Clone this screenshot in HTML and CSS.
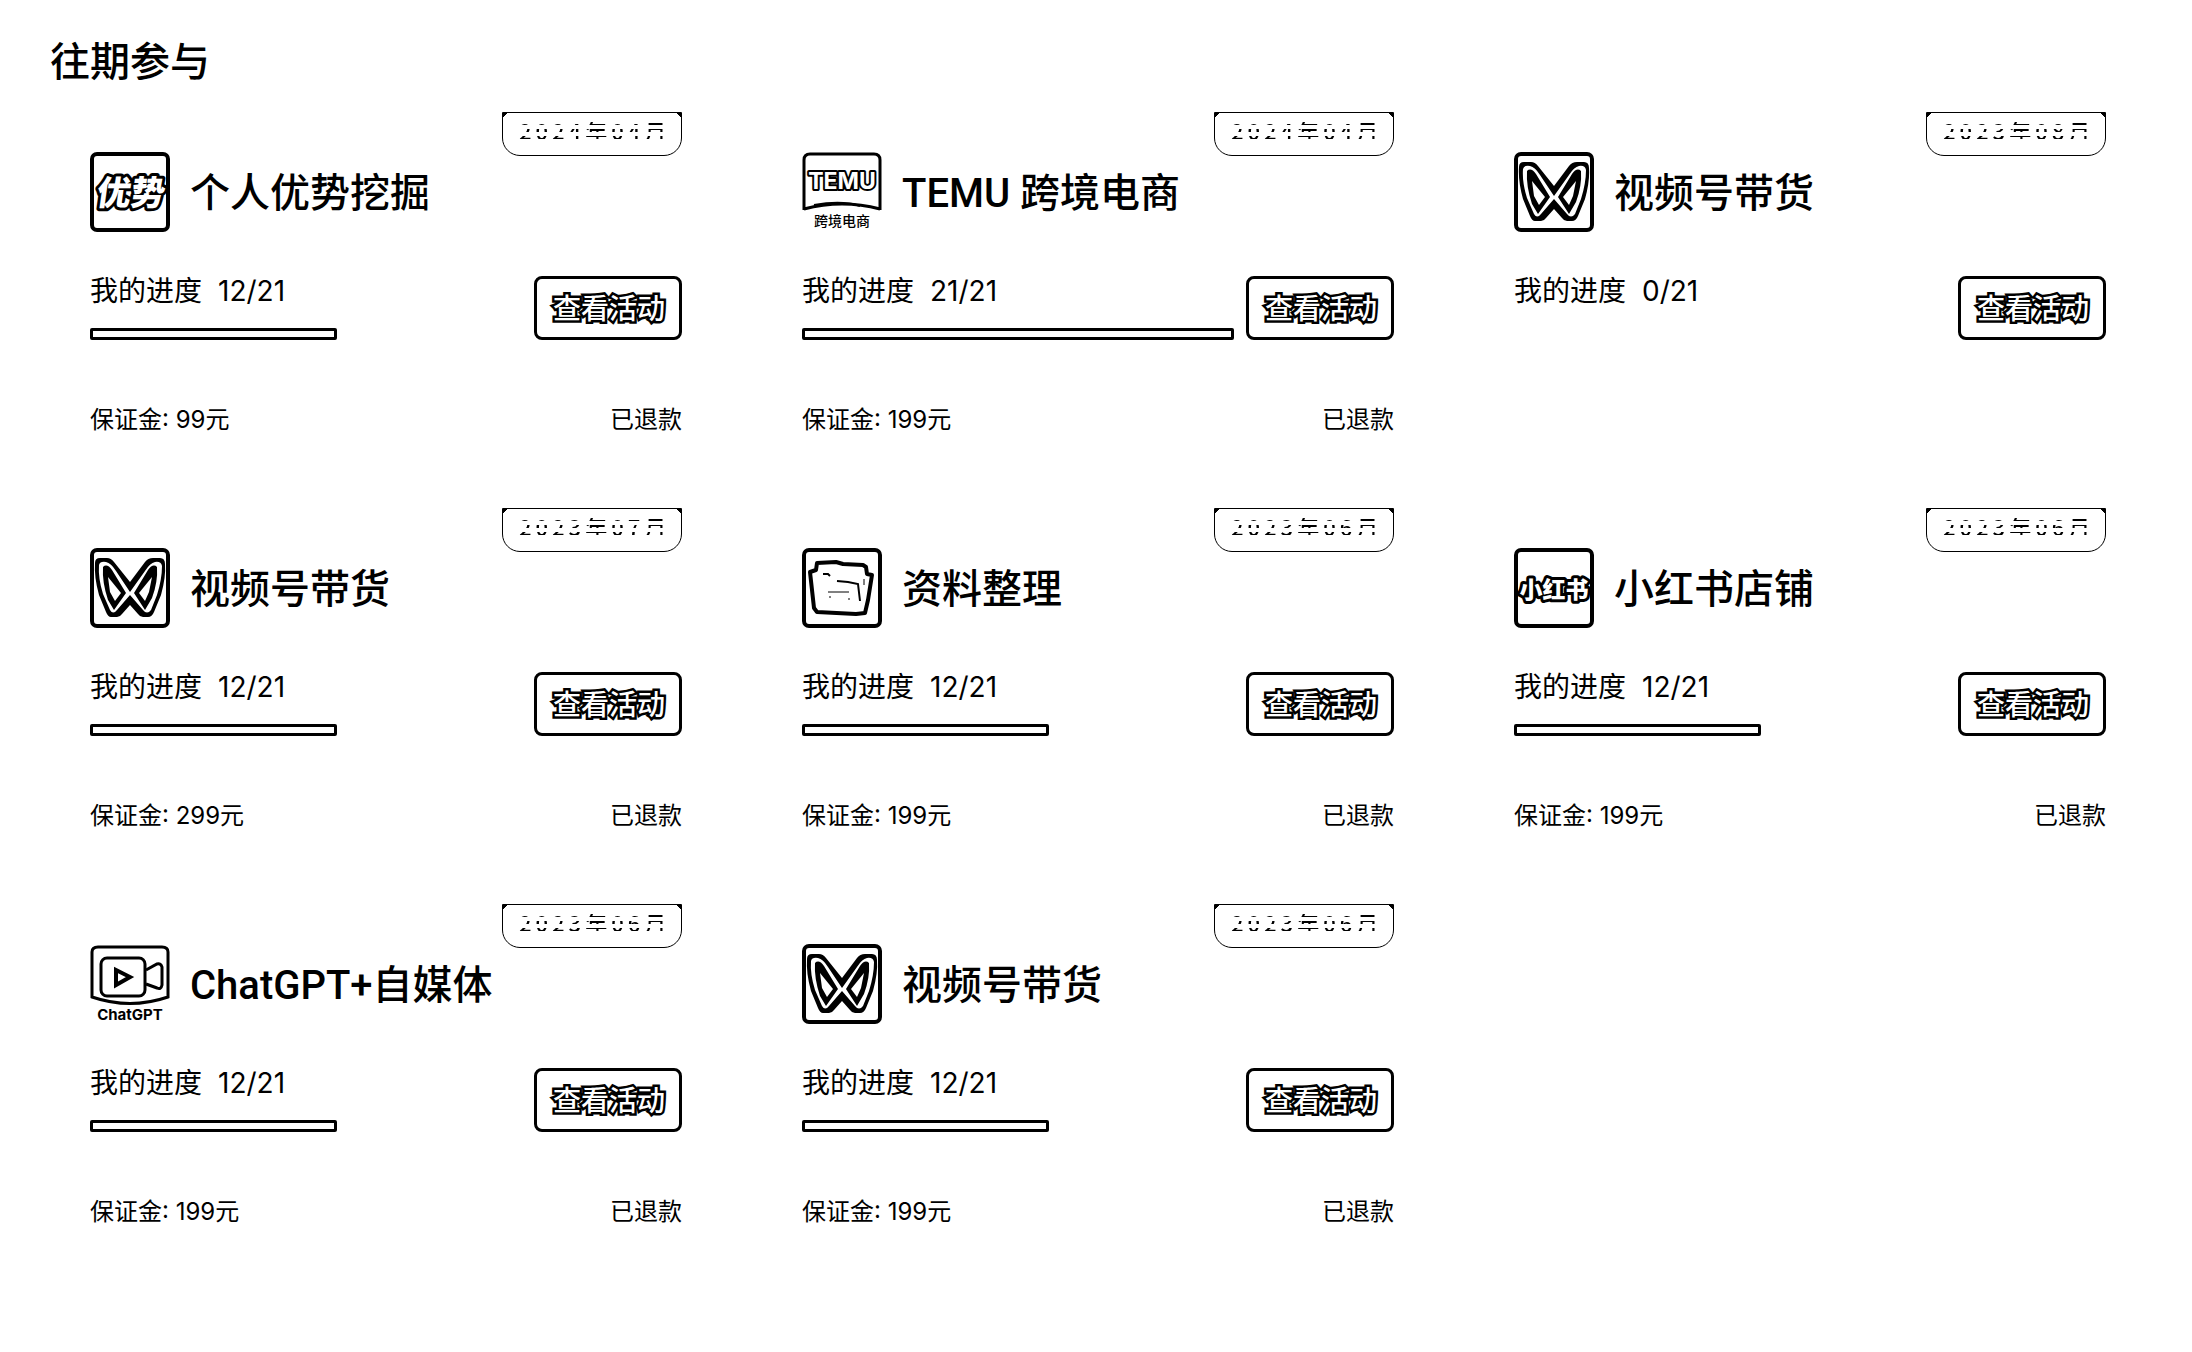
FILE: index.html
```html
<!DOCTYPE html>
<html lang="zh-CN">
<head>
<meta charset="utf-8">
<meta name="viewport" content="width=device-width, initial-scale=1">
<title>往期参与</title>
<link rel="stylesheet" href="styles.css">
</head>
<body>
<svg class="sprite" aria-hidden="true">
  <symbol id="frame" viewBox="0 0 80 80">
    <rect x="2" y="2" width="76" height="76" rx="5" fill="#fff" stroke="#000" stroke-width="4"/>
  </symbol>
  <symbol id="channels" viewBox="0 0 80 80">
    <use href="#frame"/>
    <path d="M5 15Q5 10 10 10H17Q21 10 24 14L40 34L55 14Q58 10 63 10H70Q75 10 75 16Q76 29 71 47L64 64Q62 69 58 69H53Q50 69 48 66L40 57L32 66Q30 69 27 69H21Q18 69 16 64L9 47Q4 29 5 15Z" fill="#000"/>
    <path d="M9 17Q10 13 16 14Q21 15 26 23L40 44L55 23Q60 15 65 14Q71 13 72 18Q72 31 67 47L61 62Q57 67 53 62L40 47L27 62Q23 67 20 62L13 46Q8 30 9 17Z" fill="#fff"/>
    <path d="M13 19Q17 15 22 22L36 45L24 62L18 52Q12 34 13 19Z M18 29L20 44L25 53L31 45Z" fill="#000" fill-rule="evenodd"/>
    <path d="M67 19Q63 15 58 22L44 45L55 62L62 50Q68 34 67 19Z M62 29L49 45L55 53L59 44Z" fill="#000" fill-rule="evenodd"/>
  </symbol>
</svg>

<main class="page">
  <h1 class="page-title">往期参与</h1>
  <div class="grid">

    <article class="card">
      <time class="date"><span>2024年04月</span></time>
      <header class="head">
        <svg class="icon" viewBox="0 0 80 80" aria-hidden="true"><use href="#frame"/><text class="icon-word" x="40" y="53" font-size="34" transform="translate(7 0) skewX(-8)" text-anchor="middle">优势</text></svg>
        <h2 class="name">个人优势挖掘</h2>
      </header>
      <div class="status">
        <div class="progress"><p class="label">我的进度<span class="count">12/21</span></p><div class="track"><div class="bar" style="width:57.14%"></div></div></div>
        <button class="view" type="button">查看活动</button>
      </div>
      <footer class="foot"><span>保证金: 99元</span><span>已退款</span></footer>
    </article>

    <article class="card">
      <time class="date"><span>2024年04月</span></time>
      <header class="head">
        <svg class="icon" viewBox="0 0 80 80" aria-hidden="true"><path d="M2 58V8Q2 2 8 2H72Q78 2 78 8V58M2 57Q40 47 78 57" fill="none" stroke="#000" stroke-width="3"/><path d="M12 53Q40 48 58 54" fill="none" stroke="#000" stroke-width="2"/><text class="icon-word thin latin" x="40" y="37" font-size="23" text-anchor="middle">TEMU</text><text class="icon-caption" x="40" y="74" font-size="14" text-anchor="middle">跨境电商</text></svg>
        <h2 class="name">TEMU 跨境电商</h2>
      </header>
      <div class="status">
        <div class="progress"><p class="label">我的进度<span class="count">21/21</span></p><div class="track"><div class="bar" style="width:100%"></div></div></div>
        <button class="view" type="button">查看活动</button>
      </div>
      <footer class="foot"><span>保证金: 199元</span><span>已退款</span></footer>
    </article>

    <article class="card">
      <time class="date"><span>2023年08月</span></time>
      <header class="head">
        <svg class="icon" viewBox="0 0 80 80" aria-hidden="true"><use href="#channels"/></svg>
        <h2 class="name">视频号带货</h2>
      </header>
      <div class="status">
        <div class="progress"><p class="label">我的进度<span class="count">0/21</span></p></div>
        <button class="view" type="button">查看活动</button>
      </div>
    </article>

    <article class="card">
      <time class="date"><span>2023年07月</span></time>
      <header class="head">
        <svg class="icon" viewBox="0 0 80 80" aria-hidden="true"><use href="#channels"/></svg>
        <h2 class="name">视频号带货</h2>
      </header>
      <div class="status">
        <div class="progress"><p class="label">我的进度<span class="count">12/21</span></p><div class="track"><div class="bar" style="width:57.14%"></div></div></div>
        <button class="view" type="button">查看活动</button>
      </div>
      <footer class="foot"><span>保证金: 299元</span><span>已退款</span></footer>
    </article>

    <article class="card">
      <time class="date"><span>2023年06月</span></time>
      <header class="head">
        <svg class="icon" viewBox="0 0 80 80" aria-hidden="true"><use href="#frame"/><path d="M14 22L15 15L34 14L41 16L61 17L64 19L65 26L70 27L66 52L63 65L54 66L15 64L12 60L8 24Z" fill="#fff" stroke="#000" stroke-width="4" stroke-linejoin="round"/><path d="M21 26H26L28 28M35 33L46 34L56 36L58 53" fill="none" stroke="#000" stroke-width="2"/><path d="M26 44H47M27 49h2M46 51h2M62 31v6" fill="none" stroke="#000" stroke-width="1"/></svg>
        <h2 class="name">资料整理</h2>
      </header>
      <div class="status">
        <div class="progress"><p class="label">我的进度<span class="count">12/21</span></p><div class="track"><div class="bar" style="width:57.14%"></div></div></div>
        <button class="view" type="button">查看活动</button>
      </div>
      <footer class="foot"><span>保证金: 199元</span><span>已退款</span></footer>
    </article>

    <article class="card">
      <time class="date"><span>2023年06月</span></time>
      <header class="head">
        <svg class="icon" viewBox="0 0 80 80" aria-hidden="true"><use href="#frame"/><text class="icon-word" x="40" y="50" font-size="23" text-anchor="middle">小红书</text></svg>
        <h2 class="name">小红书店铺</h2>
      </header>
      <div class="status">
        <div class="progress"><p class="label">我的进度<span class="count">12/21</span></p><div class="track"><div class="bar" style="width:57.14%"></div></div></div>
        <button class="view" type="button">查看活动</button>
      </div>
      <footer class="foot"><span>保证金: 199元</span><span>已退款</span></footer>
    </article>

    <article class="card">
      <time class="date"><span>2023年06月</span></time>
      <header class="head">
        <svg class="icon" viewBox="0 0 80 80" aria-hidden="true"><path d="M2 53V8Q2 3 8 3H72Q78 3 78 8V53Q40 66 2 53Z" fill="none" stroke="#000" stroke-width="3"/><rect x="11" y="14" width="44" height="38" rx="6" fill="none" stroke="#000" stroke-width="3"/><path d="M26 26V41L40 33Z" fill="none" stroke="#000" stroke-width="4"/><path d="M56 26L67 20Q71 19 72 23V41Q71 46 67 44L56 40" fill="none" stroke="#000" stroke-width="3"/><text class="icon-caption latin" x="40" y="76" font-size="15" text-anchor="middle">ChatGPT</text></svg>
        <h2 class="name">ChatGPT+自媒体</h2>
      </header>
      <div class="status">
        <div class="progress"><p class="label">我的进度<span class="count">12/21</span></p><div class="track"><div class="bar" style="width:57.14%"></div></div></div>
        <button class="view" type="button">查看活动</button>
      </div>
      <footer class="foot"><span>保证金: 199元</span><span>已退款</span></footer>
    </article>

    <article class="card">
      <time class="date"><span>2023年06月</span></time>
      <header class="head">
        <svg class="icon" viewBox="0 0 80 80" aria-hidden="true"><use href="#channels"/></svg>
        <h2 class="name">视频号带货</h2>
      </header>
      <div class="status">
        <div class="progress"><p class="label">我的进度<span class="count">12/21</span></p><div class="track"><div class="bar" style="width:57.14%"></div></div></div>
        <button class="view" type="button">查看活动</button>
      </div>
      <footer class="foot"><span>保证金: 199元</span><span>已退款</span></footer>
    </article>

  </div>
</main>
</body>
</html>
```
FILE: styles.css
```css
* { box-sizing: border-box; }

body {
  margin: 0;
  background: #fff;
  color: #000;
  font-family: Inter, "Noto Sans CJK SC", sans-serif;
}

h1, h2, p { margin: 0; font-weight: 500; }

.sprite { position: absolute; width: 0; height: 0; }

.page { padding: 34px 46px 40px 50px; }

.page-title {
  margin-bottom: 22px;
  font-size: 40px;
  line-height: 56px;
}

.grid {
  display: grid;
  grid-template-columns: repeat(3, minmax(0, 1fr));
  gap: 40px;
}

.card {
  position: relative;
  min-height: 356px;
  padding: 40px 40px 30px;
}

/* Month tag hanging from the top edge of the card */
.date {
  position: absolute;
  top: 0;
  right: 40px;
  width: 180px;
  height: 44px;
  padding-left: 16px;
  border: 1px solid #000;
  border-radius: 0 0 18px 18px;
  background:
    linear-gradient(135deg, #000 3px, transparent 3px),
    linear-gradient(225deg, #000 3px, transparent 3px);
  font-family: "Noto Sans CJK SC", sans-serif;
  font-size: 22px;
  font-weight: 500;
  line-height: 34px;
  letter-spacing: 4px;
  white-space: nowrap;
}

/* Glyphs show through narrow bands only */
.date span {
  display: block;
  color: transparent;
  background: linear-gradient(#000, #000) 0 9px / 100% 3px no-repeat,
    linear-gradient(#000, #000) 0 16px / 100% 3px no-repeat,
    linear-gradient(#000, #000) 0 23px / 100% 3px no-repeat;
  -webkit-background-clip: text;
  background-clip: text;
}

.head {
  display: flex;
  align-items: center;
  gap: 20px;
  margin-bottom: 44px;
}

.icon { flex: none; width: 80px; height: 80px; }

.icon-word {
  fill: #fff;
  stroke: #000;
  stroke-width: 6px;
  stroke-linejoin: round;
  paint-order: stroke;
  font-family: "Noto Sans CJK SC", sans-serif;
  font-weight: 900;
}

.icon-word.thin { stroke-width: 4px; }

.icon-caption {
  font-family: "Noto Sans CJK SC", sans-serif;
  font-weight: 500;
}

.latin { font-family: Inter, sans-serif; font-weight: 700; }

.name {
  padding-top: 3px;
  font-family: Roboto, "Noto Sans CJK SC", sans-serif;
  font-size: 40px;
  line-height: 56px;
  white-space: nowrap;
}

.status {
  display: flex;
  gap: 12px;
  height: 64px;
  margin-bottom: 62px;
}

.progress {
  display: flex;
  flex: 1;
  flex-direction: column;
  justify-content: space-between;
}

.label {
  font-size: 28px;
  font-weight: 400;
  line-height: 30px;
}

.count { margin-left: 16px; }

.track { height: 12px; }

.bar {
  height: 12px;
  border: 3px solid #000;
  border-radius: 2px;
}

.view {
  flex: none;
  width: 148px;
  padding: 2px 0 0 2px;
  border: 3px solid #000;
  border-radius: 8px;
  background: #fff;
  color: #fff;
  font: 500 28px/40px Inter, "Noto Sans CJK SC", sans-serif;
  -webkit-text-stroke: 5px #000;
  paint-order: stroke fill;
}

.foot {
  display: flex;
  justify-content: space-between;
  font-size: 24px;
  line-height: 36px;
}
```
